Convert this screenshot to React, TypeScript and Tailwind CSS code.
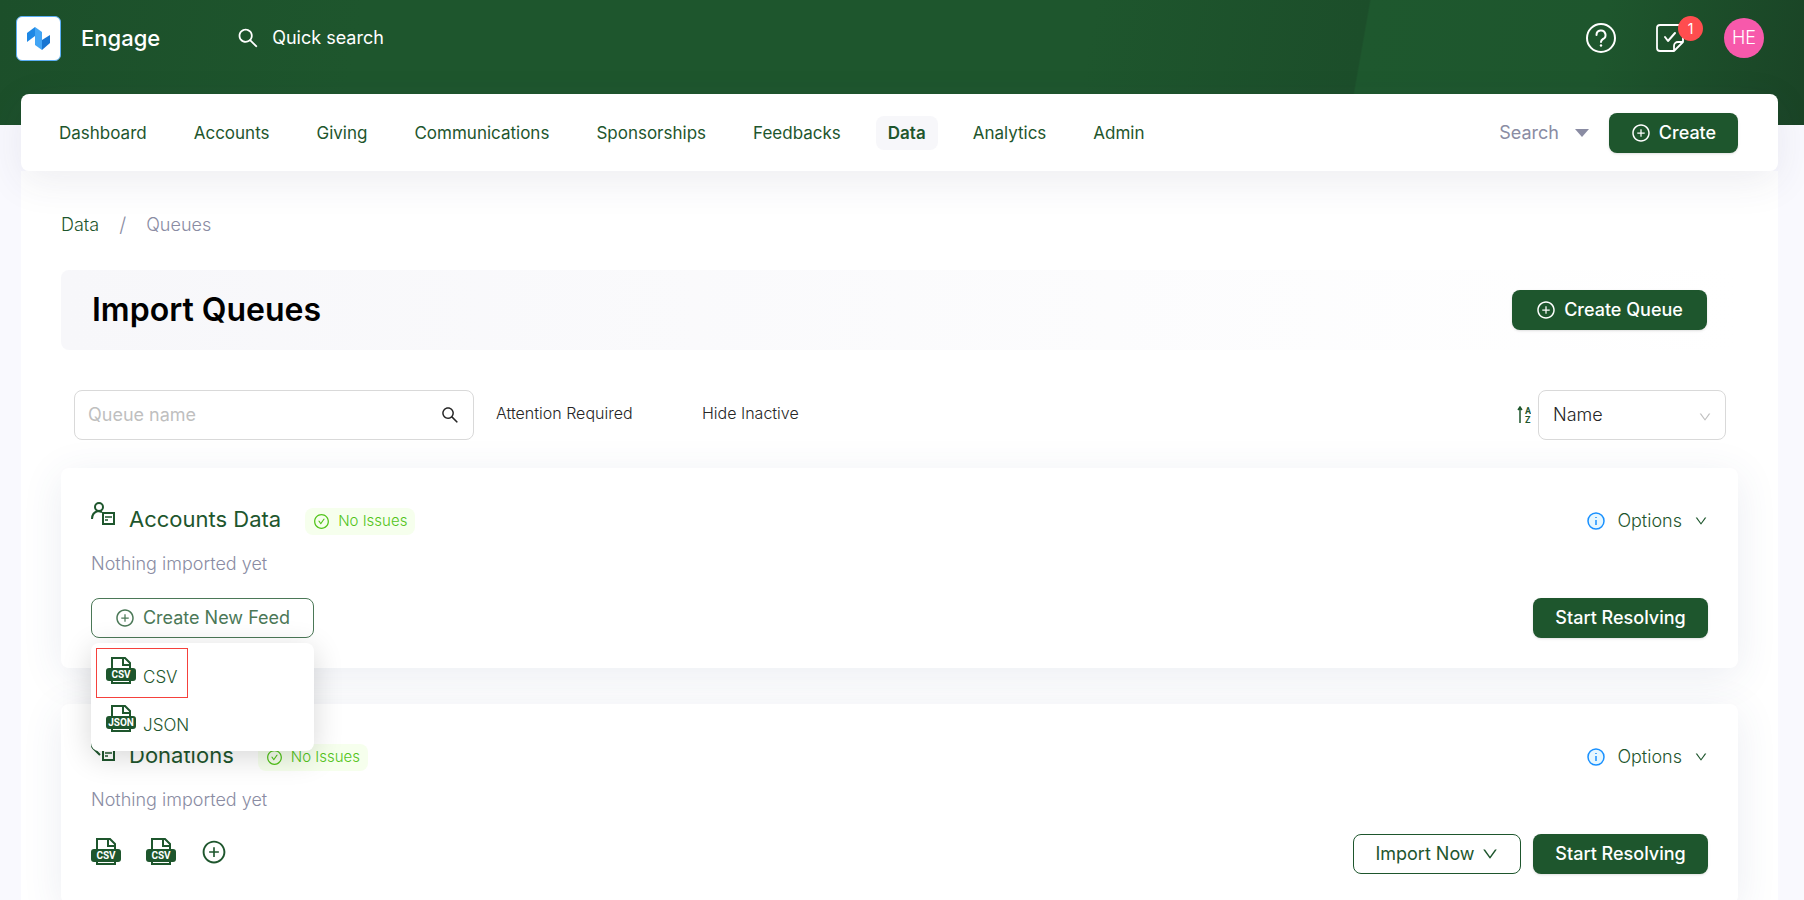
import { AiOutlineCheckCircle, AiOutlineDown, AiOutlinePlusCircle, AiOutlineSearch } from 'react-icons/ai';

interface Queue {
    id: string;
    name: string;
    kind: 'accounts' | 'donations';
    feeds: string[];
    menuOpen: boolean;
}

const navItems = ['Dashboard', 'Accounts', 'Giving', 'Communications', 'Sponsorships', 'Feedbacks', 'Data', 'Analytics', 'Admin'];

const queues: Queue[] = [
    { id: 'accounts', name: 'Accounts Data', kind: 'accounts', feeds: [], menuOpen: true },
    { id: 'donations', name: 'Donations', kind: 'donations', feeds: ['CSV', 'CSV'], menuOpen: false },
];

function Logo() {
    return (
        <svg viewBox="0 0 24 24" className="size-6" aria-hidden="true">
            <path d="M0 7 L8 1 V10 L0 16 Z" fill="#1e88e5" />
            <path d="M8 1 L15 6 V24 L8 19 Z" fill="#42a5f5" />
            <path d="M15 14 L23 9 V17 L15 24 Z" fill="#1976d2" />
        </svg>
    );
}

function HelpIcon() {
    return (
        <svg viewBox="0 0 30 30" className="size-[30px]" fill="none" stroke="currentColor" strokeLinecap="round" aria-hidden="true">
            <circle cx="15" cy="15" r="14" strokeWidth="2" />
            <path d="M10.5 12a4.5 4.5 0 1 1 6.5 4c-1.5 .8-2 1.5-2 3" strokeWidth="2" />
            <circle cx="15" cy="22.5" r="1.2" fill="currentColor" stroke="none" />
        </svg>
    );
}

function TaskIcon() {
    return (
        <svg viewBox="0 0 28 28" className="size-7" fill="none" stroke="currentColor" strokeWidth="1.8" strokeLinecap="round" strokeLinejoin="round" aria-hidden="true">
            <path d="M27 18V4a3 3 0 0 0-3-3H4a3 3 0 0 0-3 3v20a3 3 0 0 0 3 3h14l9-9h-5a4 4 0 0 0-4 4v5" />
            <path d="M9 13l3 4 7-8" strokeWidth="2" />
        </svg>
    );
}

function InfoIcon() {
    return (
        <svg viewBox="0 0 18 18" className="size-[18px]" aria-hidden="true">
            <circle cx="9" cy="9" r="8" fill="#e6f7ff" stroke="#1890ff" strokeWidth="1.5" />
            <path d="M9 8v5M9 5v1" stroke="#1890ff" strokeWidth="1.5" />
        </svg>
    );
}

function FileIcon({ label }: { label: string }) {
    return (
        <svg viewBox="0 0 30 27" className="h-[27px] w-[30px]" aria-hidden="true">
            <path d="M6 12V1h13l5 5v6M6 23v3h18v-3" fill="none" stroke="#1e562d" strokeWidth="2" />
            <path d="M17 1v7h7" fill="none" stroke="#1e562d" strokeWidth="2" />
            <rect y="11" width="30" height="13" rx="3" fill="#1e562d" />
            <text x="15" y="21" textAnchor="middle" fontSize="10" fontWeight="700" fontFamily="Roboto, sans-serif" fill="#fff">
                {label}
            </text>
        </svg>
    );
}

function QueueIcon({ kind }: { kind: Queue['kind'] }) {
    return (
        <svg viewBox="0 0 24 24" className="size-6" fill="none" stroke="#1e562d" strokeWidth="2" aria-hidden="true">
            {kind === 'accounts' ? (
                <>
                    <circle cx="8" cy="5" r="4" />
                    <path d="M1 17c0-4 2-7 6-8l4 1" />
                </>
            ) : (
                <path d="M9 17L2 10C-1 6 3 0 8 4c5-4 9 0 8 4" />
            )}
            <path d="M12 11h11v11H12z" />
            <path d="M14 15h7M14 18h3" strokeWidth="1.5" />
        </svg>
    );
}

function SortIcon() {
    return (
        <svg viewBox="0 0 14 18" className="h-[18px] w-[14px]" aria-hidden="true">
            <path d="M3 17V2M1 4l2-3 2 3" fill="none" stroke="#1e562d" strokeWidth="1.5" />
            <text x="8" y="8" fontSize="9" fontWeight="700" fontFamily="Roboto, sans-serif" fill="#1e562d">A</text>
            <text x="8" y="17" fontSize="9" fontWeight="700" fontFamily="Roboto, sans-serif" fill="#1e562d">Z</text>
        </svg>
    );
}

function Header() {
    return (
        <header className="h-[125px] bg-[linear-gradient(100deg,#1c4f2a_0%,#1e562d_20%,#1e562d_60%,#1c4e2a_75%,#1e582e_75.1%,#1e562d_88%,#1a4426_100%)] text-white">
            <div className="flex h-[76px] items-center pr-10 pl-4">
                <a href="#" aria-label="Home" className="flex size-[45px] items-center justify-center rounded-md border border-[#5aaef5] bg-white">
                    <Logo />
                </a>
                <span className="ml-5 text-[22px] leading-8 font-medium">Engage</span>
                <button className="ml-[76px] flex items-center gap-3 text-lg leading-6">
                    <AiOutlineSearch className="size-6" />
                    Quick search
                </button>
                <div className="ml-auto flex items-center gap-10">
                    <button aria-label="Help">
                        <HelpIcon />
                    </button>
                    <button aria-label="Tasks" className="relative">
                        <TaskIcon />
                        <span className="absolute -top-2 -right-[19px] flex size-[25px] items-center justify-center rounded-full bg-[#ff4d4f] text-sm">1</span>
                    </button>
                    <button className="size-10 rounded-full bg-[#f759ab] text-lg font-light">HE</button>
                </div>
            </div>
        </header>
    );
}

function NavBar() {
    return (
        <nav className="relative z-10 flex h-[77px] items-center rounded-lg bg-white pr-10 pl-[26px] shadow-[0_10px_40px_rgba(50,60,100,0.09)]">
            <div className="flex items-center gap-[23px]">
                {navItems.map((item) => (
                    <a
                        key={item}
                        href="#"
                        className={item === 'Data'
                            ? 'rounded-lg bg-[#f7f7fa] px-3 py-[5px] text-[17px] leading-6 font-semibold text-[#1e562d]'
                            : 'px-3 py-[5px] text-[17px] leading-6 text-[#1e562d]'}
                    >
                        {item}
                    </a>
                ))}
            </div>
            <button className="ml-auto flex items-center gap-4 text-lg text-[#8a8ca3]">
                Search
                <span className="border-x-[7px] border-t-8 border-x-transparent border-t-[#8a8ca3]" />
            </button>
            <button className="ml-5 flex h-10 w-[129px] items-center justify-center gap-2 rounded-lg bg-[#1e562d] text-lg font-medium text-white shadow-sm">
                <AiOutlinePlusCircle className="size-5" />
                Create
            </button>
        </nav>
    );
}

function FeedMenu() {
    return (
        <div className="absolute top-[45px] left-0 z-10 flex h-[108px] w-full flex-col items-start rounded-lg bg-white p-[5px] text-[#1e562d] shadow-[0_6px_30px_rgba(0,0,0,0.16)]">
            <button className="flex h-[50px] w-[92px] items-start gap-[7px] border border-[#f5413c] px-[9px] pt-2 text-[17px] font-light">
                <FileIcon label="CSV" />
                <span className="pt-2">CSV</span>
            </button>
            <button className="flex h-12 items-start gap-[7px] px-[10px] pt-[7px] text-[17px] font-light">
                <FileIcon label="JSON" />
                <span className="pt-2">JSON</span>
            </button>
        </div>
    );
}

function QueueCard({ queue }: { queue: Queue }) {
    return (
        <section className="rounded-lg bg-white px-[30px] pt-[34px] pb-[30px] shadow-[0_8px_40px_rgba(60,75,130,0.1)]">
            <div className="flex h-[34px] items-center">
                <div className="self-start">
                    <QueueIcon kind={queue.kind} />
                </div>
                <h2 className="ml-[14px] text-[22px] leading-8 text-[#1e562d]">{queue.name}</h2>
                <span className="mt-1 ml-6 flex h-[27px] items-center gap-2 rounded-lg bg-[#f6ffed] px-2 text-[15px] font-light text-[#52c41a]">
                    <AiOutlineCheckCircle className="size-[17px]" />
                    No Issues
                </span>
                <button className="mt-1 ml-auto flex items-center gap-3 text-lg font-light text-[#1e562d]">
                    <InfoIcon />
                    Options
                    <AiOutlineDown className="size-[14px]" />
                </button>
            </div>
            <p className="mt-4 text-lg leading-6 font-light text-[#8a8ca3]">Nothing imported yet</p>
            <div className="mt-[22px] flex h-10 items-center">
                {queue.menuOpen ? (
                    <div className="relative w-[223px]">
                        <button className="flex h-10 w-full items-center justify-center gap-2 rounded-lg border border-[#4b7857] text-lg text-[#4b7857]">
                            <AiOutlinePlusCircle className="size-5" />
                            Create New Feed
                        </button>
                        <FeedMenu />
                    </div>
                ) : (
                    <div className="flex items-center gap-[25px] self-start pt-1">
                        {queue.feeds.map((feed, index) => (
                            <button key={index} aria-label={feed}>
                                <FileIcon label={feed} />
                            </button>
                        ))}
                        <button aria-label="Add feed">
                            <AiOutlinePlusCircle className="size-[26px] text-[#1e562d]" />
                        </button>
                    </div>
                )}
                <div className="ml-auto flex gap-3">
                    {!queue.menuOpen && (
                        <button className="flex h-10 w-[168px] items-center justify-center gap-[6px] rounded-lg border border-[#1e562d] text-lg text-[#1e562d]">
                            Import Now
                            <AiOutlineDown className="size-[18px]" />
                        </button>
                    )}
                    <button className="h-10 w-[175px] rounded-lg bg-[#1e562d] text-lg font-medium text-white shadow-sm">Start Resolving</button>
                </div>
            </div>
        </section>
    );
}

export default function App() {
    return (
        <div className="h-screen overflow-hidden bg-[#f9f9fe] font-['Inter',sans-serif]">
            <Header />
            <div className="relative -mt-[31px] mr-[26px] ml-[21px]">
                <NavBar />
                <main className="bg-white px-10 pt-10 pb-10">
                    <div className="flex h-[27px] items-center gap-5 text-lg font-light text-[#8a8ca3]">
                        <a href="#" className="text-[#1e562d]">Data</a>
                        <span className="text-xl">/</span>
                        <span>Queues</span>
                    </div>
                    <div className="mt-8 flex h-20 items-center justify-between rounded-lg bg-linear-to-r from-[#f7f7fa] to-white px-[31px]">
                        <h1 className="text-[32px] font-semibold text-black">Import Queues</h1>
                        <button className="flex h-10 w-[195px] items-center justify-center gap-2 rounded-lg bg-[#1e562d] text-lg font-medium text-white shadow-sm">
                            <AiOutlinePlusCircle className="size-5" />
                            Create Queue
                        </button>
                    </div>
                    <div className="mt-10 flex h-[50px] items-center pr-3 pl-[13px]">
                        <label className="flex h-full w-[400px] items-center rounded-lg border border-[#d9d9d9] px-[13px]">
                            <input type="text" placeholder="Queue name" className="min-w-0 flex-1 text-lg outline-none placeholder:text-[#bfbfbf]" />
                            <AiOutlineSearch className="size-5 text-[#262626]" />
                        </label>
                        <span className="ml-[22px] w-[206px] pb-1 text-base font-light text-[#262626]">Attention Required</span>
                        <span className="pb-1 text-base font-light text-[#262626]">Hide Inactive</span>
                        <button aria-label="Sort direction" className="mr-[7px] ml-auto">
                            <SortIcon />
                        </button>
                        <div className="relative h-full w-[188px]">
                            <select aria-label="Sort by" className="h-full w-full appearance-none rounded-lg border border-[#d9d9d9] px-[14px] text-lg font-light text-[#262626]">
                                <option>Name</option>
                            </select>
                            <AiOutlineDown className="pointer-events-none absolute top-5 right-[14px] size-[14px] text-[#bfbfbf]" />
                        </div>
                    </div>
                    <div className="mt-7 flex flex-col gap-9">
                        {queues.map((queue) => (
                            <QueueCard key={queue.id} queue={queue} />
                        ))}
                    </div>
                </main>
            </div>
        </div>
    );
}
